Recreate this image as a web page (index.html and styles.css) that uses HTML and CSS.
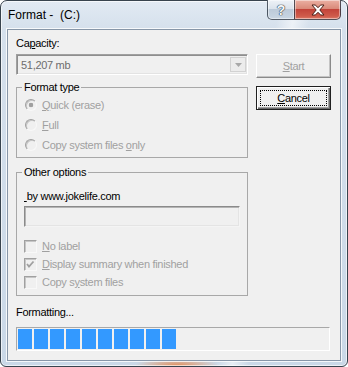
FILE: index.html
```html
<!DOCTYPE html>
<html lang="en">
<head>
    <meta charset="UTF-8">
    <title>Format - (C:)</title>
    <link rel="stylesheet" href="styles.css">
</head>
<body>
    <div class="window">
        <div class="titlebar">
            <span class="title">Format -&nbsp; (C:)</span>
            <div class="captionButtons">
                <span class="capBtn help">?</span>
                <span class="capBtn close">
                    <svg width="14" height="12" viewBox="0 0 14 12">
                        <polygon points="1,1 4.2,1 7,3.6 9.8,1 13,1 8.8,6 13,11 9.8,11 7,8.4 4.2,11 1,11 5.2,6" fill="#fff" stroke="#4b2019" stroke-width="1" stroke-linejoin="round"/>
                    </svg>
                </span>
            </div>
        </div>

        <div class="client">
            <div class="top">
                <div class="left">
                    <div class="label">Ca<u>p</u>acity:</div>
                    <div class="combo">
                        <span class="comboText">51,207 mb</span>
                        <span class="dropBtn">
                            <svg width="7" height="4" viewBox="0 0 7 4"><polygon points="0,0 7,0 3.5,4" fill="#a8a8a8"/></svg>
                        </span>
                    </div>

                    <fieldset class="group formatType">
                        <legend>Format type</legend>
                        <div class="opt"><span class="radio checked"></span><span><u>Q</u>uick (erase)</span></div>
                        <div class="opt"><span class="radio"></span><span><u>F</u>ull</span></div>
                        <div class="opt"><span class="radio"></span><span>Copy system files <u>o</u>nly</span></div>
                    </fieldset>

                    <fieldset class="group otherOptions">
                        <legend>Other options</legend>
                        <div class="label volLabel"><u>&nbsp;</u>by www.jokelife.com</div>
                        <div class="textbox"></div>
                        <div class="checks">
                            <div class="opt check"><span class="box"></span><span><u>N</u>o label</span></div>
                            <div class="opt check"><span class="box">
                                <svg width="11" height="11" viewBox="0 0 11 11"><polyline points="2,5 4,7.5 8.5,2.5" fill="none" stroke="#a0a0a0" stroke-width="1.8"/></svg>
                            </span><span><u>D</u>isplay summary when finished</span></div>
                            <div class="opt check"><span class="box"></span><span>Copy s<u>y</u>stem files</span></div>
                        </div>
                    </fieldset>
                </div>

                <div class="buttons">
                    <div class="btn disabled"><u>S</u>tart</div>
                    <div class="btn default"><span class="focusRect"><u>C</u>ancel</span></div>
                </div>
            </div>

            <div class="label status">Formatting...</div>
            <div class="progress">
                <span class="block"></span>
                <span class="block"></span>
                <span class="block"></span>
                <span class="block"></span>
                <span class="block"></span>
                <span class="block"></span>
                <span class="block"></span>
                <span class="block"></span>
                <span class="block"></span>
                <span class="block"></span>
            </div>
        </div>
    </div>
</body>
</html>
```

FILE: styles.css
```css
* {
    box-sizing: border-box;
}

body {
    margin: 0;
    font-family: "Liberation Sans", Arial, sans-serif;
    font-size: 11px;
    letter-spacing: -0.3px;
    color: #000;
    background: #fff;
}

u {
    text-decoration: underline;
    text-underline-offset: 1px;
}

/* window frame */
.window {
    width: 348px;
    height: 367px;
    border: 1px solid #38434e;
    border-radius: 7px 7px 6px 6px;
    padding: 0 6px 5px 6px;
    display: flex;
    flex-direction: column;
    background:
        radial-gradient(ellipse 42px 9px at 176px 100%, rgba(232, 128, 62, 0.85), rgba(232, 128, 62, 0)),
        linear-gradient(100deg, rgba(255, 255, 255, 0) 68%, rgba(255, 255, 255, 0.55) 72%, rgba(255, 255, 255, 0) 76%),
        linear-gradient(180deg, #e2eaf3 0, #d5e0ec 28px, #cad8e7 100%);
    box-shadow: inset 0 0 0 1px rgba(255, 255, 255, 0.65);
}

.titlebar {
    height: 28px;
    display: flex;
    align-items: flex-start;
}

.title {
    font-size: 12px;
    letter-spacing: 0;
    line-height: 14px;
    padding: 7px 0 0 1px;
}

.captionButtons {
    margin-left: auto;
    margin-top: -1px;
    display: flex;
    height: 20px;
}

.capBtn {
    height: 20px;
    display: flex;
    align-items: center;
    justify-content: center;
    border: 1px solid rgba(45, 55, 68, 0.8);
    border-top: none;
    box-shadow: inset 0 0 0 1px rgba(255, 255, 255, 0.45);
}

.help {
    width: 27px;
    border-right: none;
    border-radius: 0 0 0 5px;
    background: linear-gradient(180deg, #eef2f7 0, #dbe3ec 45%, #bccad9 50%, #c9d6e3 100%);
    font-weight: bold;
    font-size: 14px;
    letter-spacing: 0;
    color: #f4f6f8;
    text-shadow: 0 0 1px #2f3b47, 0 0 1px #2f3b47, 0 0 1px #2f3b47;
}

.close {
    width: 47px;
    border-radius: 0 0 5px 0;
    background: linear-gradient(180deg, #ebb0a3 0, #da8a7a 45%, #c3443a 50%, #cf5b4b 85%, #dc7a66 100%);
}

/* client area */
.client {
    flex: 1;
    background: #f0f0f0;
    border: 1px solid #8796a8;
    box-shadow: 0 0 0 1px rgba(255, 255, 255, 0.8);
    padding: 7px 9px 0 8px;
    display: flex;
    flex-direction: column;
}

.top {
    display: flex;
    gap: 8px;
}

.left {
    width: 232px;
}

.label {
    line-height: 13px;
}

.combo {
    margin-top: 4px;
    height: 21px;
    display: flex;
    align-items: center;
    border: 1px solid;
    border-color: #a0a0a0 #fff #fff #a0a0a0;
    box-shadow: inset 1px 1px #8e8e8e, inset -1px -1px #e3e3e3;
    padding: 0 1px 0 4px;
}

.comboText {
    color: #6d6d6d;
    flex: 1;
}

.dropBtn {
    width: 16px;
    height: 15px;
    display: flex;
    align-items: center;
    justify-content: center;
    border: 1px solid #d2d2d2;
    background: #ececec;
}

/* group boxes */
.group {
    margin: 6px 0 0;
    padding: 1px 7px 2px 7px;
    border: 1px solid #a8a8a8;
    min-width: 0;
}

.group legend {
    margin-left: -2px;
    padding: 0 2px;
    line-height: 13px;
}

.otherOptions {
    margin-top: 8px;
    padding-bottom: 4px;
}

.opt {
    display: flex;
    align-items: center;
    gap: 5px;
    height: 20px;
    color: #a0a0a0;
}

.radio {
    width: 12px;
    height: 12px;
    margin-left: 1px;
    border-radius: 50%;
    border: 1px solid;
    border-color: #a0a0a0 #f8f8f8 #f8f8f8 #a0a0a0;
    box-shadow: inset 1px 1px #c6c6c6;
    background: #f0f0f0;
}

.radio.checked {
    background: radial-gradient(circle, #a0a0a0 0, #a0a0a0 2px, #f0f0f0 2.6px);
}

.volLabel {
    margin-top: 10px;
}

.textbox {
    margin-top: 3px;
    height: 21px;
    border: 1px solid;
    border-color: #8a8a8a #f4f4f4 #f4f4f4 #8a8a8a;
    box-shadow: inset 1px 1px #b4b4b4, inset -1px -1px #e4e4e4;
}

.checks {
    margin-top: 10px;
}

.check {
    height: 18px;
}

.box {
    width: 13px;
    height: 13px;
    display: flex;
    border: 1px solid;
    border-color: #a0a0a0 #f8f8f8 #f8f8f8 #a0a0a0;
    box-shadow: inset 1px 1px #c6c6c6;
}

/* push buttons */
.buttons {
    width: 75px;
    padding-top: 17px;
    display: flex;
    flex-direction: column;
    gap: 8px;
}

.btn {
    height: 24px;
    display: flex;
    align-items: center;
    justify-content: center;
    border: 1px solid;
}

.btn.disabled {
    color: #a0a0a0;
    border-color: #fff #8a8a8a #8a8a8a #fff;
    box-shadow: inset -1px -1px #c4c4c4;
}

.btn.default {
    border-color: #202020;
    padding: 3px;
    box-shadow: inset 1px 1px #fff, inset -1px -1px #6a6a6a, inset -2px -2px #a0a0a0;
}

.focusRect {
    flex: 1;
    align-self: stretch;
    display: flex;
    align-items: center;
    justify-content: center;
    border: 1px dotted #000;
}

/* progress */
.status {
    margin-top: 10px;
}

.progress {
    margin-top: 8px;
    margin-right: 1px;
    height: 24px;
    border: 1px solid;
    border-color: #a8a8a8 #fff #fff #a8a8a8;
    padding: 1px;
    display: flex;
    gap: 2px;
}

.block {
    width: 14px;
    background: #3399ff;
}
```
